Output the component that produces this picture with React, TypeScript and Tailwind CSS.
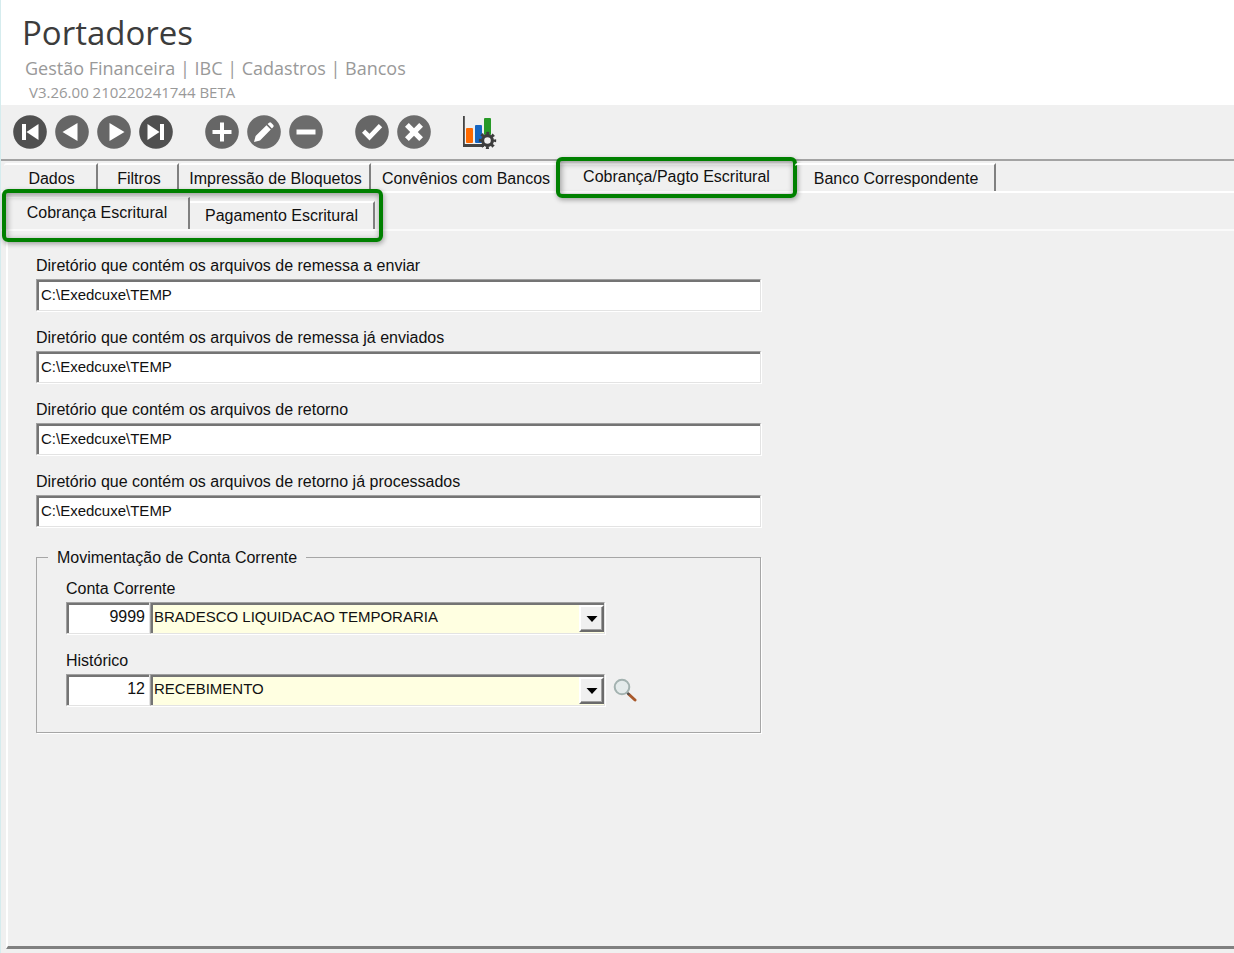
import type { ReactNode } from "react";
import { clsx } from "clsx";

interface iconButtonProps {
  label: string;
  fill: string;
  children: ReactNode;
}

interface pathFieldProps {
  id: string;
  label: string;
  value: string;
}

interface lookupFieldProps {
  id: string;
  label: string;
  code: string;
  description: string;
  children?: ReactNode;
}

const mainTabs = [
  { label: "Dados", width: "w-[94px]" },
  { label: "Filtros", width: "w-[81px]" },
  { label: "Impressão de Bloquetos", width: "w-[192px]" },
  { label: "Convênios com Bancos", width: "w-[187px]", last: true },
  { label: "Cobrança/Pagto Escritural", width: "w-[237px]", active: true },
  { label: "Banco Correspondente", width: "w-[201px]" },
];

const directories = [
  {
    id: "remessa-enviar",
    label: "Diretório que contém os arquivos de remessa a enviar",
    value: "C:\\Exedcuxe\\TEMP",
  },
  {
    id: "remessa-enviados",
    label: "Diretório que contém os arquivos de remessa já enviados",
    value: "C:\\Exedcuxe\\TEMP",
  },
  {
    id: "retorno",
    label: "Diretório que contém os arquivos de retorno",
    value: "C:\\Exedcuxe\\TEMP",
  },
  {
    id: "retorno-processados",
    label: "Diretório que contém os arquivos de retorno já processados",
    value: "C:\\Exedcuxe\\TEMP",
  },
];

// round toolbar button with a white glyph
function IconButton({ label, fill, children }: iconButtonProps) {
  return (
    <button type="button" aria-label={label} className="size-[34px]">
      <svg viewBox="0 0 34 34" className="size-full" fill="#fff">
        <circle cx="17" cy="17" r="16.8" fill={fill} />
        {children}
      </svg>
    </button>
  );
}

function PathField({ id, label, value }: pathFieldProps) {
  return (
    <div className="flex flex-col gap-[2px]">
      <label htmlFor={id} className="leading-[22px]">
        {label}
      </label>
      <input
        id={id}
        type="text"
        defaultValue={value}
        className="h-8 w-full border border-t-[#a0a0a0] border-l-[#a0a0a0] border-r-[#e3e3e3] border-b-[#e3e3e3] bg-white pb-[2px] pl-1 text-[15px] shadow-[inset_2px_2px_0_#747474,1px_1px_0_#fff] outline-none"
      />
    </div>
  );
}

// code box plus the drop-down with its description
function LookupField({
  id,
  label,
  code,
  description,
  children,
}: lookupFieldProps) {
  return (
    <div className="flex flex-col gap-[2px]">
      <label htmlFor={id} className="leading-[22px]">
        {label}
      </label>
      <div className="flex items-center">
        <input
          id={id}
          type="text"
          defaultValue={code}
          className="h-8 w-[84px] border border-t-[#a0a0a0] border-l-[#a0a0a0] border-r-[#e3e3e3] border-b-[#e3e3e3] bg-white pr-1 pb-[2px] text-right shadow-[inset_2px_2px_0_#747474,1px_1px_0_#fff] outline-none"
        />
        <div className="relative w-[455px]">
          <select
            aria-label={`${label} - descrição`}
            className="block h-8 w-full appearance-none border border-t-[#a0a0a0] border-l-[#a0a0a0] border-r-[#e3e3e3] border-b-[#e3e3e3] bg-[#ffffe1] pb-[2px] pl-[3px] text-[15px] shadow-[inset_2px_2px_0_#747474,1px_1px_0_#fff] outline-none"
          >
            <option>{description}</option>
          </select>
          <span className="pointer-events-none absolute top-[3px] right-px flex h-[27px] w-[25px] items-center justify-center border-t-2 border-r-2 border-b-2 border-l-2 border-t-white border-r-[#6b6b6b] border-b-[#6b6b6b] border-l-white bg-[#f0f0f0] shadow-[inset_-1px_-1px_0_#a0a0a0]">
            <svg viewBox="0 0 12 6" className="h-[6px] w-3">
              <path d="M0.5 0h11L6 6z" fill="#000" />
            </svg>
          </span>
        </div>
        {children}
      </div>
    </div>
  );
}

export default function App() {
  return (
    <div className="flex min-h-screen flex-col border-l border-[#d5ecee] bg-[#f0f0f0] font-['Liberation_Sans',Arial,sans-serif] text-base text-[#111]">
      {/* header */}
      <header className="flex h-[105px] flex-col bg-white pt-3 font-['Open_Sans','Noto_Sans',sans-serif] text-[#999]">
        <h1 className="pl-[21px] text-[33px] leading-[42px] text-[#3c3c3c]">
          Portadores
        </h1>
        <p className="pl-6 text-[18px] leading-7">
          Gestão Financeira | IBC | Cadastros | Bancos
        </p>
        <p className="pl-7 text-[15px] leading-5">V3.26.00 210220241744 BETA</p>
      </header>

      {/* toolbar */}
      <div className="flex items-center gap-8 border-b-2 border-[#a3a3a3] pt-[10px] pb-[10px] pl-3">
        <div className="flex gap-2">
          <IconButton label="Primeiro" fill="#505050">
            <path d="M9 9h4v16H9zM25.500 9v16L13.500 17z" />
          </IconButton>
          <IconButton label="Anterior" fill="#666">
            <path d="M22.500 8v18L7.500 17z" />
          </IconButton>
          <IconButton label="Próximo" fill="#666">
            <path d="M12.500 8v18L27.500 17z" />
          </IconButton>
          <IconButton label="Último" fill="#505050">
            <path d="M25 9h-4v16h4zM8.500 9v16L20.500 17z" />
          </IconButton>
        </div>
        <div className="flex gap-2">
          <IconButton label="Incluir" fill="#666">
            <path d="M15 7.500h4V15h7.500v4H19v7.500h-4V19H7.500v-4H15z" />
          </IconButton>
          <IconButton label="Alterar" fill="#6c6c6c">
            <path d="M7 27l1.600-6L19.500 10.200l4.300 4.300L13 25.400zM20.600 9.100l1.500-1.400q1-.8 2 0l2.200 2.200q.9 1 0 2l-1.400 1.500z" />
          </IconButton>
          <IconButton label="Excluir" fill="#6c6c6c">
            <path d="M7.500 14.500h19v5h-19z" />
          </IconButton>
        </div>
        <div className="flex gap-2">
          <IconButton label="Confirmar" fill="#666">
            <path d="M7 17.800l3.200-3.200 4.300 4.200 9.300-9.800 3.400 3.300L14.500 25.500z" />
          </IconButton>
          <IconButton label="Cancelar" fill="#6c6c6c">
            <path d="M11.800 8L17 13.200 22.200 8 26 11.800 20.800 17 26 22.200 22.200 26 17 20.800 11.800 26 8 22.200 13.200 17 8 11.800z" />
          </IconButton>
        </div>
        <button type="button" aria-label="Gráficos" className="size-[34px]">
          <svg viewBox="1 0 34 34" className="size-full">
            <path d="M0 1h2.800v28H22v3H0z" fill="#444" />
            <rect x="4" y="13" width="7" height="15" rx="1" fill="#ff6a00" />
            <rect x="13" y="10" width="7" height="18" rx="1" fill="#1766c2" />
            <rect x="22" y="3" width="7" height="17" rx="1" fill="#279a27" />
            <circle
              cx="25.5"
              cy="25.5"
              r="7.2"
              fill="none"
              stroke="#3d3d3d"
              strokeWidth="3"
              strokeDasharray="2.855 2.8"
              strokeDashoffset="1.42"
            />
            <circle cx="25.5" cy="25.5" r="4.9" fill="#f0f0f0" stroke="#3d3d3d" strokeWidth="3.2" />
          </svg>
        </button>
      </div>

      {/* main tabs */}
      <div
        role="tablist"
        className="mt-[2px] flex h-[30px] border-b-2 border-white pl-[3px]"
      >
        {mainTabs.map((tab) => (
          <button
            key={tab.label}
            type="button"
            role="tab"
            aria-selected={Boolean(tab.active)}
            className={clsx(
              "relative shrink-0 border-t-2 border-white whitespace-nowrap",
              tab.width,
              tab.active
                ? "pb-2"
                : "rounded-tl-[3px] pt-[2px] pl-[3px]",
              !tab.active && !tab.last && "border-r-2 border-r-[#808080]"
            )}
          >
            {tab.label}
            {tab.active && (
              <span className="absolute -top-[8px] -right-[2px] -left-[2px] h-[41px] rounded-md border-4 border-[#008000] shadow-[1px_2px_5px_#0005,inset_1px_2px_6px_#0006]" />
            )}
          </button>
        ))}
      </div>

      {/* sub tabs */}
      <div
        role="tablist"
        className="relative flex h-[38px] items-end border-b-2 border-[#fafafa] pl-[5px]"
      >
        <button
          type="button"
          role="tab"
          aria-selected="true"
          className="h-8 w-[184px] border-t border-r-2 border-t-[#fafafa] border-r-[#808080] pb-[2px]"
        >
          Cobrança Escritural
        </button>
        <button
          type="button"
          role="tab"
          aria-selected="false"
          className="h-[28px] w-[185px] border-t-2 border-r-2 border-t-white border-r-[#808080]"
        >
          Pagamento Escritural
        </button>
        <span className="pointer-events-none absolute -top-[4px] left-px h-[53px] w-[381px] rounded-md border-4 border-[#008000] shadow-[1px_2px_5px_#0005,inset_1px_2px_6px_#0006]" />
      </div>

      {/* tab content */}
      <main className="mb-1 ml-[5px] flex-1 border-b-[3px] border-l-2 border-b-[#808080] border-l-white pt-6 pl-7">
        <form className="flex max-w-[725px] flex-col gap-4">
          {directories.map((dir) => (
            <PathField key={dir.id} {...dir} />
          ))}

          <fieldset className="mt-[3px] border border-[#a6a6a6] pb-[26px] pl-[29px] shadow-[1px_1px_0_#fff]">
            <legend className="-ml-[18px] px-[9px] pt-[2px] leading-5">
              Movimentação de Conta Corrente
            </legend>
            <div className="flex flex-col gap-4 pt-[10px]">
              <LookupField
                id="conta"
                label="Conta Corrente"
                code="9999"
                description="BRADESCO LIQUIDACAO TEMPORARIA"
              />
              <LookupField
                id="historico"
                label="Histórico"
                code="12"
                description="RECEBIMENTO"
              >
                <button type="button" aria-label="Pesquisar" className="ml-2">
                  <svg viewBox="0 0 24 24" className="size-6" fill="none">
                    <path d="M15.500 16l6.500 6" stroke="#a9592b" strokeWidth="3" strokeLinecap="round" />
                    <path d="M13.800 14.300l2.500 2.500" stroke="#555" strokeWidth="2" />
                    <circle cx="9" cy="9" r="7.300" fill="#e4ebeb" stroke="#a3b2b0" strokeWidth="2" />
                  </svg>
                </button>
              </LookupField>
            </div>
          </fieldset>
        </form>
      </main>
    </div>
  );
}
